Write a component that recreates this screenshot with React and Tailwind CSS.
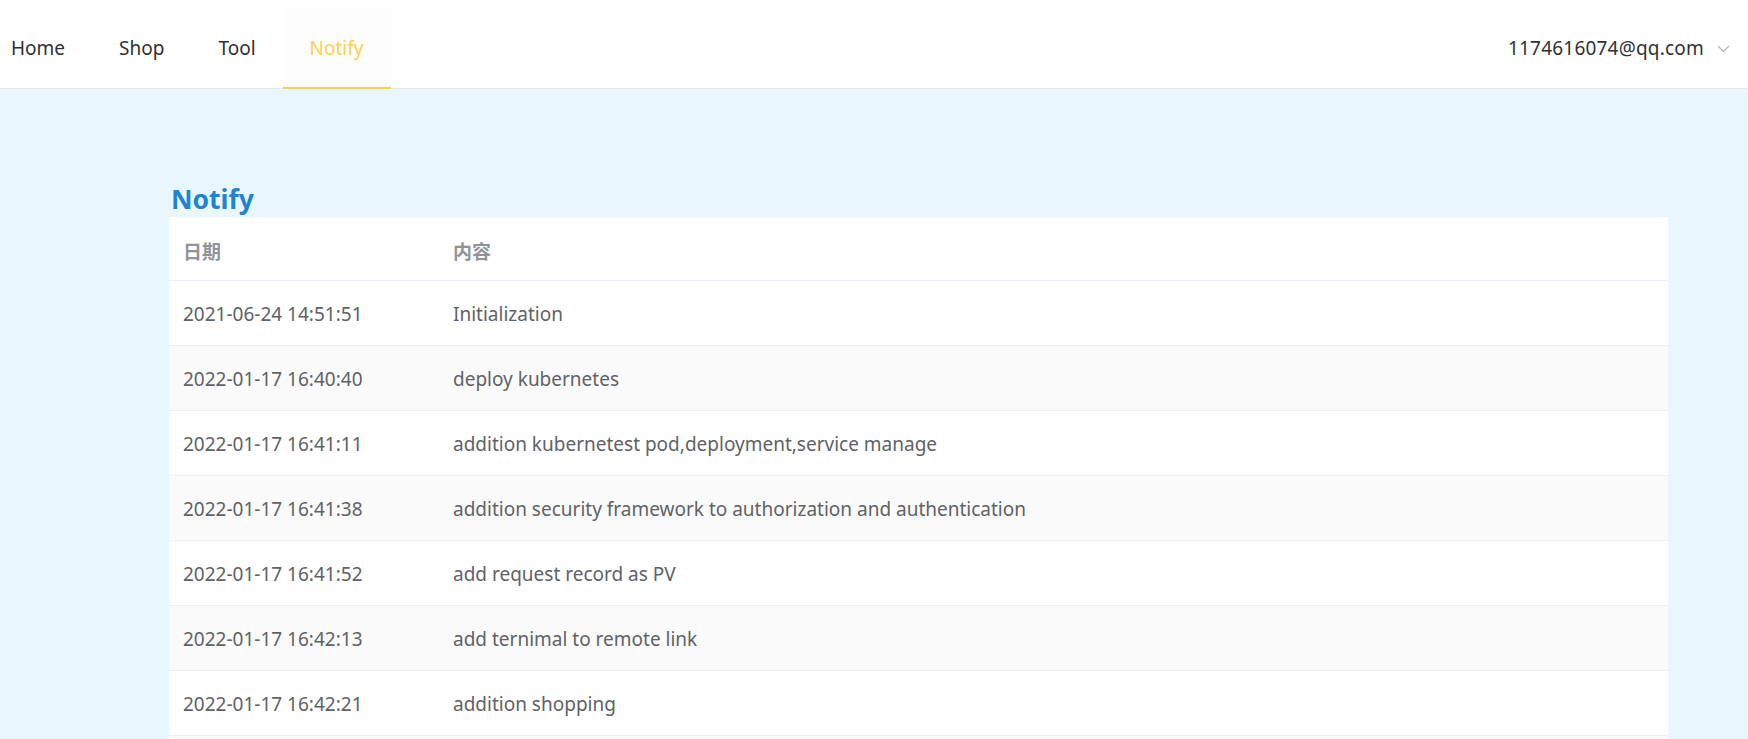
import React from 'react';

const rows = [
    { date: '2021-06-24 14:51:51', content: 'Initialization' },
    { date: '2022-01-17 16:40:40', content: 'deploy kubernetes' },
    { date: '2022-01-17 16:41:11', content: 'addition kubernetest pod,deployment,service manage' },
    { date: '2022-01-17 16:41:38', content: 'addition security framework to authorization and authentication' },
    { date: '2022-01-17 16:41:52', content: 'add request record as PV' },
    { date: '2022-01-17 16:42:13', content: 'add ternimal to remote link' },
    { date: '2022-01-17 16:42:21', content: 'addition shopping' },
];

const tabs = ['Home', 'Shop', 'Tool', 'Notify'];

const App = () => {
    const active = 'Notify';

    return (
        <div className="h-screen overflow-hidden bg-[#eaf6fe] font-['Noto_Sans','Noto_Sans_CJK_SC',sans-serif]">
            <nav className="h-[89px] bg-white border-b border-[#e4e7ed] flex items-end justify-between">
                <ul className="flex items-end ml-[-16px]">
                    {tabs.map((t) => (
                        <li
                            key={t}
                            className={
                                t === active
                                    ? 'h-[81px] px-[27px] pt-[2px] flex items-center text-[19px] text-[#ffd04b] bg-[#fdfdfd] border-b-2 border-[#ffd04b] mb-[-1px]'
                                    : 'h-[81px] px-[27px] pt-[2px] flex items-center text-[19px] text-[#303133]'
                            }
                        >
                            {t}
                        </li>
                    ))}
                </ul>
                <div className="h-[81px] pt-[2px] flex items-center pr-[18px] text-[19px] text-[#303133]">
                    <span className="tracking-[0.2px]">1174616074@qq.com</span>
                    <svg className="ml-[13px] mt-[1px]" width="13" height="8" viewBox="0 0 13 8" fill="none">
                        <path d="M1 1l5.5 5.5L12 1" stroke="#b0b4bc" strokeWidth="1.2" />
                    </svg>
                </div>
            </nav>

            <main className="pl-[169px] pt-[95px]">
                <h1 className="text-[26.5px] leading-[30px] font-bold text-[#1c84d4] pl-[2px] mb-[3px]">Notify</h1>
                <div className="w-[1499px] bg-white">
                    <div className="flex h-[64px] items-center border-b border-[#ebeef5] text-[19px] font-bold text-[#909399] pt-[7px]">
                        <div className="w-[270px] pl-[14px]">日期</div>
                        <div className="pl-[14px]">内容</div>
                    </div>
                    {rows.map((r, i) => (
                        <div
                            key={r.date}
                            className={
                                i % 2 === 1
                                    ? 'flex h-[65px] items-center pt-[3px] border-b border-[#ebeef5] text-[19px] text-[#606266] bg-[#fafafa]'
                                    : 'flex h-[65px] items-center pt-[3px] border-b border-[#ebeef5] text-[19px] text-[#606266]'
                            }
                        >
                            <div className="w-[270px] pl-[14px]">{r.date}</div>
                            <div className="pl-[14px]">{r.content}</div>
                        </div>
                    ))}
                    <div className="h-[65px] bg-[#fafafa]" />
                </div>
            </main>
        </div>
    );
};

export default App;
